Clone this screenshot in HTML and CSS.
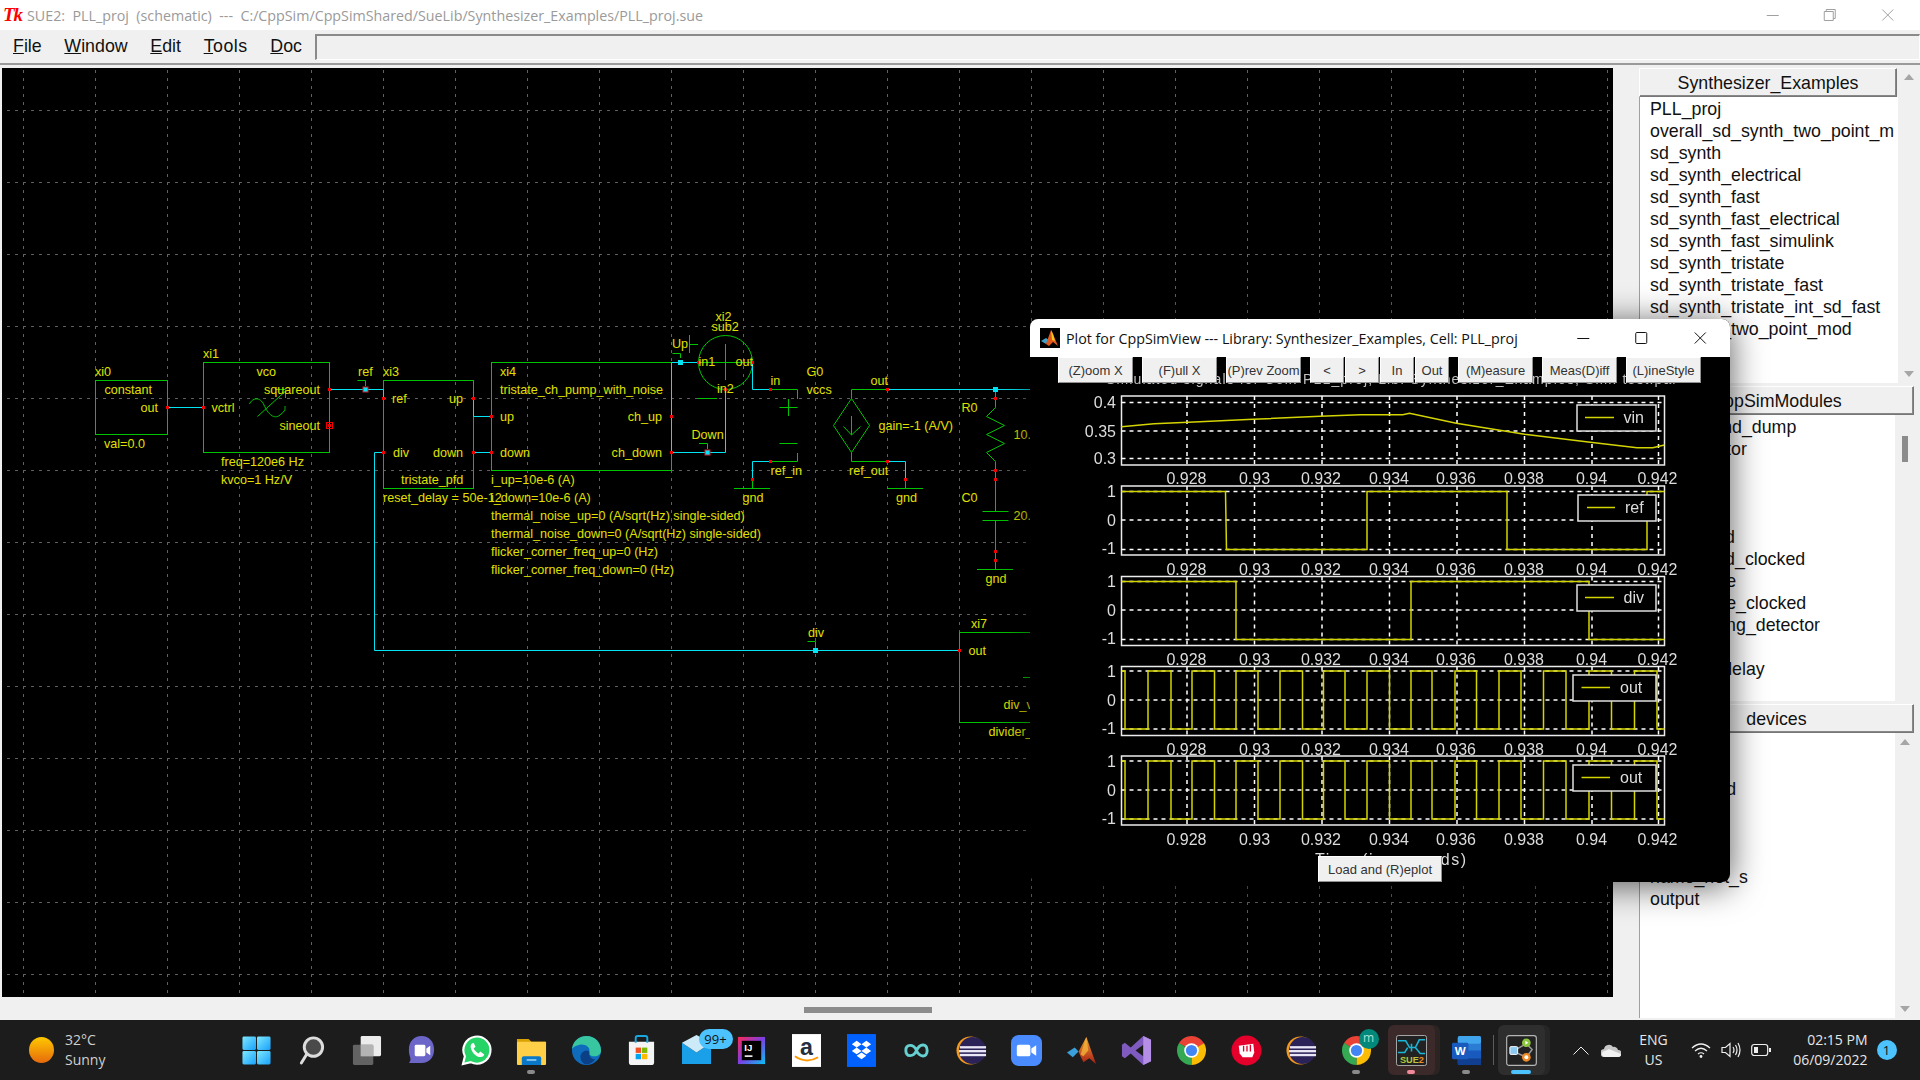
FILE: index.html
```html
<!DOCTYPE html>
<html lang="en">
<head>
  <meta charset="UTF-8">
  <title>SUE2: PLL_proj (schematic)</title>
  <link rel="stylesheet" href="styles.css">
</head>
<body>

  <!-- title bar -->
  <div class="titlebar">
    <span class="tk-logo">Tk</span>
    <span class="titlebar-text">SUE2:  PLL_proj  (schematic)  ---  C:/CppSim/CppSimShared/SueLib/Synthesizer_Examples/PLL_proj.sue</span>
    <div class="win-buttons">
      <svg viewBox="0 0 12 12"><path d="M0 6.5H12"/></svg>
      <svg viewBox="0 0 12 12"><path d="M.5 2.5H9.5V11.5H.5ZM2.5 2.5V.5H11.5V9.5H9.5"/></svg>
      <svg viewBox="0 0 12 12"><path d="M.5 .5L11.5 11.5M11.5 .5L.5 11.5"/></svg>
    </div>
  </div>

  <!-- menu -->
  <div class="menubar">
    <span class="menu-item"><u>F</u>ile</span>
    <span class="menu-item"><u>W</u>indow</span>
    <span class="menu-item"><u>E</u>dit</span>
    <span class="menu-item menu-wide"><u>T</u>ools</span>
    <span class="menu-item"><u>D</u>oc</span>
    <div class="command-entry"></div>
  </div>

  <div class="workspace">
    <div class="canvas-col">
      <!-- schematic, drawn in page coordinates -->
      <svg class="schematic" viewBox="2 68 1611 929" width="1611" height="929">
        <defs>
          <pattern id="grid" x="23" y="38" width="72" height="72" patternUnits="userSpaceOnUse">
            <path class="grid-line" d="M.5 0V72M0 .5H72"/>
          </pattern>
          <rect id="p" class="pin" x="-1.5" y="-1.5" width="3" height="3"/>
          <rect id="n" class="node" x="-2.5" y="-2.5" width="5" height="5"/>
        </defs>
        <rect x="2" y="68" width="1611" height="929" fill="#000"/>
        <rect x="2" y="68" width="1611" height="929" fill="url(#grid)"/>

        <!-- symbols -->
        <g class="sym">
          <rect x="95.5" y="380.5" width="72" height="54"/>
          <rect x="203.5" y="362.5" width="126" height="90"/>
          <rect x="383.5" y="380.5" width="90" height="108"/>
          <rect x="491.5" y="362.5" width="180" height="108"/>
          <rect x="959.5" y="632.5" width="200" height="90"/>
          <path d="M249.5 404C252 398 260 396 264 405S274 420 280 415S285 410 285 406"/>
          <path d="M257.5 416.5L285 391.5M275 389.5H285.5V398"/>
          <path d="M357.5 380.5H365.5V386"/>
          <path d="M672.5 353.5H680.5V358M689.5 335V353M689.5 344.5H698"/>
          <circle cx="725.5" cy="362.5" r="27"/>
          <path d="M725.5 344V380M698.5 362.5H752.5M698 398.5H717"/>
          <path d="M699 443.5H707.5V449"/>
          <path d="M770.5 389.5H797.5V399M779.5 407.5H797.5M788.5 399V416M779.5 443.5H797.5M797.5 453V461.5H770.5"/>
          <path d="M734 488.5H770M752.5 479.5V488.5"/>
          <path d="M851.5 398.5L869.5 425.5L851.5 452.5L833.5 425.5Z"/>
          <path d="M851.5 416V435M843.5 426.5L851.5 435L860.5 426.5"/>
          <path d="M851.5 398.5V389.5H887.5M851.5 452.5V461.5H887.5"/>
          <path d="M887 488.5H923M905.5 479.5V488.5"/>
          <path d="M995.5 389.5V407.5L986.5 416.5L1004.5 425.5L986.5 434.5L1004.5 443.5L986.5 452.5L995.5 461.5V511.5M982.5 511.5H1008.5M982.5 520.5H1008.5M995.5 520.5V569.5M977 569.5H1013"/>
          <path d="M807.5 641.5H815.5V647M1023 677.5H1030"/>
        </g>

        <!-- wires -->
        <g class="wire">
          <path d="M167.5 407.5H203.5"/>
          <path d="M329.5 389.5H383.5V398.5"/>
          <path d="M473.5 398.5V416.5H491.5M473.5 452.5H491.5"/>
          <path d="M383.5 452.5H374.5V650.5H959.5"/>
          <path d="M671.5 362.5H698.5M671.5 362.5V452.5H725.5V389.5"/>
          <path d="M752.5 362.5V389.5H770.5M770.5 461.5H752.5V479.5"/>
          <path d="M887.5 389.5H1032M887.5 461.5H905.5V479.5"/>
        </g>

        <!-- pins and nets -->
        <use href="#p" x="167.5" y="407.5"/><use href="#p" x="203.5" y="407.5"/>
        <use href="#p" x="329.5" y="389.5"/><use href="#p" x="329.5" y="425.5"/>
        <rect class="pin-box" x="326.5" y="422.5" width="6" height="6"/>
        <use href="#p" x="383.5" y="398.5"/><use href="#p" x="383.5" y="452.5"/>
        <use href="#p" x="473.5" y="398.5"/><use href="#p" x="473.5" y="452.5"/>
        <use href="#p" x="491.5" y="416.5"/><use href="#p" x="491.5" y="452.5"/>
        <use href="#p" x="671.5" y="416.5"/><use href="#p" x="671.5" y="452.5"/>
        <use href="#p" x="698.5" y="362.5"/><use href="#p" x="752.5" y="362.5"/>
        <use href="#p" x="725.5" y="389.5"/><use href="#p" x="770.5" y="389.5"/>
        <use href="#p" x="770.5" y="461.5"/><use href="#p" x="752.5" y="479.5"/>
        <use href="#p" x="887.5" y="389.5"/><use href="#p" x="887.5" y="461.5"/>
        <use href="#p" x="905.5" y="479.5"/><use href="#p" x="995.5" y="398.5"/>
        <use href="#p" x="995.5" y="470.5"/><use href="#p" x="995.5" y="479.5"/>
        <use href="#p" x="995.5" y="551.5"/><use href="#p" x="995.5" y="560.5"/>
        <use href="#p" x="959.5" y="650.5"/>
        <use href="#n" x="680.5" y="362.5"/><use href="#n" x="995.5" y="389.5"/>
        <use href="#n" x="815.5" y="650.5"/>
        <rect class="node-open" x="363" y="387" width="5" height="5"/>
        <rect class="node-open" x="705" y="450" width="5" height="5"/>

        <!-- labels -->
        <g class="lbl">
          <text x="95" y="376">xi0</text>
          <text x="104.5" y="394">constant</text>
          <text class="end" x="158" y="412">out</text>
          <text x="104" y="448">val=0.0</text>
          <text x="203" y="358">xi1</text>
          <text x="256.5" y="376">vco</text>
          <text class="end" x="320" y="394">squareout</text>
          <text x="211.5" y="412">vctrl</text>
          <text class="end" x="320" y="430">sineout</text>
          <text x="221" y="466">freq=120e6 Hz</text>
          <text x="221" y="484">kvco=1 Hz/V</text>
          <text x="358" y="376">ref</text>
          <text x="383" y="376">xi3</text>
          <text x="392" y="403">ref</text>
          <text class="end" x="463" y="403">up</text>
          <text x="393" y="457">div</text>
          <text class="end" x="463" y="457">down</text>
          <text x="401" y="484">tristate_pfd</text>
          <text x="383" y="502">reset_delay = 50e-12</text>
          <text x="500" y="376">xi4</text>
          <text x="500" y="394">tristate_ch_pump_with_noise</text>
          <text x="500" y="421">up</text>
          <text class="end" x="662" y="421">ch_up</text>
          <text x="500" y="457">down</text>
          <text class="end" x="662" y="457">ch_down</text>
          <text x="491" y="484">i_up=10e-6 (A)</text>
          <text x="491" y="502">i_down=10e-6 (A)</text>
          <text x="491" y="520">thermal_noise_up=0 (A/sqrt(Hz) single-sided)</text>
          <text x="491" y="538">thermal_noise_down=0 (A/sqrt(Hz) single-sided)</text>
          <text x="491" y="556">flicker_corner_freq_up=0 (Hz)</text>
          <text x="491" y="574">flicker_corner_freq_down=0 (Hz)</text>
          <text x="715.5" y="321">xi2</text>
          <text x="711.5" y="331">sub2</text>
          <text x="672" y="348">Up</text>
          <text x="698.5" y="366">in1</text>
          <text x="735.5" y="366">out</text>
          <text x="717" y="393">in2</text>
          <text x="691.5" y="439">Down</text>
          <text x="770.5" y="385">in</text>
          <text x="770.5" y="475">ref_in</text>
          <text x="742.5" y="502">gnd</text>
          <text x="806.5" y="376">G0</text>
          <text x="806.5" y="394">vccs</text>
          <text x="870.5" y="385">out</text>
          <text x="849" y="475">ref_out</text>
          <text x="878.5" y="430">gain=-1 (A/V)</text>
          <text x="896" y="502">gnd</text>
          <text x="961.5" y="412">R0</text>
          <text x="1013.5" y="439">10.0k</text>
          <text x="961.5" y="502">C0</text>
          <text x="1013.5" y="520">20.0p</text>
          <text x="985.5" y="583">gnd</text>
          <text x="808" y="637">div</text>
          <text x="971" y="628">xi7</text>
          <text x="968.5" y="655">out</text>
          <text x="1003.5" y="709">div_val</text>
          <text x="988.5" y="736">divider_cell</text>
        </g>
      </svg>
      <div class="hscroll"><div class="hscroll-thumb"></div></div>
    </div>

    <!-- library browser -->
    <div class="sidebar">
      <div class="lib lib-first">
        <div class="lib-title">Synthesizer_Examples</div>
        <div class="vscroll"><i class="arrow-up"></i><i class="arrow-down"></i></div>
        <ul class="lib-list">
          <li>PLL_proj</li>
          <li>overall_sd_synth_two_point_m</li>
          <li>sd_synth</li>
          <li>sd_synth_electrical</li>
          <li>sd_synth_fast</li>
          <li>sd_synth_fast_electrical</li>
          <li>sd_synth_fast_simulink</li>
          <li>sd_synth_tristate</li>
          <li>sd_synth_tristate_fast</li>
          <li>sd_synth_tristate_int_sd_fast</li>
          <li>sd_synth_two_point_mod</li>
        </ul>
      </div>
      <div class="lib">
        <div class="lib-title">CppSimModules</div>
        <ul class="lib-list">
          <li>accum_and_dump</li>
          <li>accumulator</li>
          <li>buffer</li>
          <li>counter</li>
          <li>divider</li>
          <li>discretized</li>
          <li>discretized_clocked</li>
          <li>hold_pulse</li>
          <li>hold_pulse_clocked</li>
          <li>up_crossing_detector</li>
          <li>sub</li>
          <li>discrete_delay</li>
        </ul>
        <div class="vscroll vscroll-thumbed"><i class="thumb"></i></div>
      </div>
      <div class="lib">
        <div class="lib-title">devices</div>
        <ul class="lib-list">
          <li>capacitor</li>
          <li>gnd</li>
          <li>signal_gnd</li>
          <li>inductor</li>
          <li>input</li>
          <li>name_net</li>
          <li>name_net_s</li>
          <li>output</li>
        </ul>
        <div class="vscroll"><i class="arrow-up"></i><i class="arrow-down"></i></div>
      </div>
    </div>
  </div>

  <!-- plot window, floats over the schematic -->
  <div class="plot-window">
    <div class="plot-title">
      <svg class="plot-icon" viewBox="0 0 20 20">
        <rect width="20" height="20" fill="#000"/>
        <path d="M1 13L6 10L9 12L6 16Z" fill="#3fa0c8"/>
        <path d="M6 16L11 2L13 6L18 18L13 14L9 18Z" fill="#e2571c"/>
        <path d="M11 2L13 6L15 13L12 12Z" fill="#f5c820"/>
      </svg>
      <span>Plot for CppSimView --- Library: Synthesizer_Examples, Cell: PLL_proj</span>
      <div class="plot-win-buttons">
        <svg viewBox="0 0 12 12"><path d="M0 6.5H12"/></svg>
        <svg viewBox="0 0 12 12"><rect x=".5" y=".5" width="11" height="11" rx="1"/></svg>
        <svg viewBox="0 0 12 12"><path d="M.5 .5L11.5 11.5M11.5 .5L.5 11.5"/></svg>
      </div>
    </div>
    <div class="plot-body">
      <svg class="plot-svg" viewBox="1030 357 700 525" width="700" height="525">
        <defs>
          <g id="frame">
            <rect class="axes" x="1121.5" y="0" width="543" height="69"/>
            <path class="pgrid" d="M1187 0V69M1254.5 0V69M1322 0V69M1389.5 0V69M1457 0V69M1524.5 0V69M1592 0V69M1658.5 0V69"/>
          </g>
        </defs>

        <text class="ptext heading" x="1106" y="384" textLength="571">Simulated signals for Cell: PLL_proj, Lib: Synthesizer_Examples, Sim: test.par</text>

        <use href="#frame" y="396"/><use href="#frame" y="486"/><use href="#frame" y="576.5"/>
        <use href="#frame" y="666.5"/><use href="#frame" y="756"/>
        <path class="pgrid" d="M1121.5 402.5H1664.5M1121.5 431H1664.5M1121.5 458.5H1664.5"/>
        <path class="pgrid" d="M1121.5 491.5H1664.5M1121.5 520H1664.5M1121.5 549.5H1664.5"/>
        <path class="pgrid" d="M1121.5 581.5H1664.5M1121.5 610H1664.5M1121.5 639.5H1664.5"/>
        <path class="pgrid" d="M1121.5 671H1664.5M1121.5 700H1664.5M1121.5 729H1664.5"/>
        <path class="pgrid" d="M1121.5 761H1664.5M1121.5 790H1664.5M1121.5 819H1664.5"/>

        <polyline class="trace" points="1121.5,426.7 1154,423.7 1199.6,421.7 1253,419.3 1320,416.3 1360.4,414.7 1402.8,414.7 1409.5,413.3 1456.3,423.3 1524.6,434.3 1590.3,442.3 1637,447.7 1652.8,447.7 1664.4,445"/>
        <path class="trace" d="M1121.5 491.5H1225.5L1226.5 549.5H1367V491.5H1507V549.5H1647V491.5H1664.5"/>
        <path class="trace" d="M1121.5 581.5H1236V639.5H1411V581.5H1589V639.5H1664.5"/>
        <path id="outwave" class="trace" d="M1121.5 671H1125V729H1148V671H1171V729H1192V671H1214.5V729H1236V671H1258V729H1280V671H1302.5V729H1323.5V671H1345V729H1367V671H1389.5V729H1411V671H1432V729H1455V671H1476.5V729H1499V671H1521V729H1543.5V671H1566V729H1589V671H1611.5V729H1634.5V671H1657V729H1664.5"/>
        <use href="#outwave" y="90"/>

        <!-- legends -->
        <rect class="legend" x="1577" y="405" width="79" height="26"/>
        <path class="trace" d="M1585 417.5H1614"/><text class="ptext" x="1623.5" y="423">vin</text>
        <rect class="legend" x="1578" y="495" width="78" height="26"/>
        <path class="trace" d="M1587 507.5H1615"/><text class="ptext" x="1625" y="513">ref</text>
        <rect class="legend" x="1577" y="585" width="79" height="26"/>
        <path class="trace" d="M1585 597.5H1614"/><text class="ptext" x="1623.5" y="603">div</text>
        <rect class="legend" x="1573" y="675" width="83" height="26"/>
        <path class="trace" d="M1581.5 687.5H1610"/><text class="ptext" x="1620" y="693">out</text>
        <rect class="legend" x="1573" y="765" width="83" height="26"/>
        <path class="trace" d="M1581.5 777.5H1610"/><text class="ptext" x="1620" y="783">out</text>

        <!-- y ticks -->
        <g class="ptext end">
          <text x="1116" y="408">0.4</text><text x="1116" y="437">0.35</text><text x="1116" y="464">0.3</text>
          <text x="1116" y="497">1</text><text x="1116" y="526">0</text><text x="1116" y="554">-1</text>
          <text x="1116" y="587">1</text><text x="1116" y="616">0</text><text x="1116" y="644">-1</text>
          <text x="1116" y="677">1</text><text x="1116" y="706">0</text><text x="1116" y="734">-1</text>
          <text x="1116" y="767">1</text><text x="1116" y="796">0</text><text x="1116" y="824">-1</text>
        </g>
        <!-- x ticks -->
        <g class="ptext mid">
          <text x="1186.5" y="484">0.928</text><text x="1254.5" y="484">0.93</text><text x="1321" y="484">0.932</text><text x="1389" y="484">0.934</text><text x="1456" y="484">0.936</text><text x="1524" y="484">0.938</text><text x="1591.5" y="484">0.94</text><text x="1657.5" y="484">0.942</text>
          <text x="1186.5" y="575">0.928</text><text x="1254.5" y="575">0.93</text><text x="1321" y="575">0.932</text><text x="1389" y="575">0.934</text><text x="1456" y="575">0.936</text><text x="1524" y="575">0.938</text><text x="1591.5" y="575">0.94</text><text x="1657.5" y="575">0.942</text>
          <text x="1186.5" y="665">0.928</text><text x="1254.5" y="665">0.93</text><text x="1321" y="665">0.932</text><text x="1389" y="665">0.934</text><text x="1456" y="665">0.936</text><text x="1524" y="665">0.938</text><text x="1591.5" y="665">0.94</text><text x="1657.5" y="665">0.942</text>
          <text x="1186.5" y="755">0.928</text><text x="1254.5" y="755">0.93</text><text x="1321" y="755">0.932</text><text x="1389" y="755">0.934</text><text x="1456" y="755">0.936</text><text x="1524" y="755">0.938</text><text x="1591.5" y="755">0.94</text><text x="1657.5" y="755">0.942</text>
          <text x="1186.5" y="845">0.928</text><text x="1254.5" y="845">0.93</text><text x="1321" y="845">0.932</text><text x="1389" y="845">0.934</text><text x="1456" y="845">0.936</text><text x="1524" y="845">0.938</text><text x="1591.5" y="845">0.94</text><text x="1657.5" y="845">0.942</text>
        </g>
        <text class="ptext" x="1315" y="865" textLength="151">Time (in seconds)</text>
      </svg>

      <div class="plot-tools">
        <button class="tool">(Z)oom X</button>
        <button class="tool">(F)ull X</button>
        <button class="tool">(P)rev Zoom</button>
        <div class="tool-group">
          <button class="tool tool-small">&lt;</button>
          <button class="tool tool-small">&gt;</button>
          <button class="tool tool-small">In</button>
          <button class="tool tool-small">Out</button>
        </div>
        <button class="tool">(M)easure</button>
        <button class="tool">Meas(D)iff</button>
        <button class="tool">(L)ineStyle</button>
      </div>
      <button class="tool tool-replot">Load and (R)eplot</button>
    </div>
  </div>

  <!-- taskbar -->
  <div class="taskbar">
    <svg width="0" height="0" class="defs-only">
      <defs>
        <linearGradient id="wn" x1="0" y1="0" x2="1" y2="1"><stop offset="0" stop-color="#7fe9ff"/><stop offset="1" stop-color="#18a0fb"/></linearGradient>
        <linearGradient id="sun" x1="0" y1="0" x2="0" y2="1"><stop offset="0" stop-color="#ffc800"/><stop offset="1" stop-color="#e66a0c"/></linearGradient>
        <linearGradient id="ij" x1="0" y1="0" x2="1" y2="1"><stop offset="0" stop-color="#fe2857"/><stop offset=".5" stop-color="#7b3fe4"/><stop offset="1" stop-color="#07c3f2"/></linearGradient>
        <linearGradient id="ml" x1="0" y1="0" x2="0" y2="1"><stop offset="0" stop-color="#f0a030"/><stop offset="1" stop-color="#a81f14"/></linearGradient>
        <g id="eclipse">
          <circle cx="15" cy="16" r="14.5" fill="#f39a1e"/>
          <circle cx="17" cy="16" r="14" fill="#2b2358"/>
          <rect x="4" y="11.5" width="27" height="2.4" fill="#e9e6f5"/>
          <rect x="3" y="15.5" width="28" height="2.4" fill="#e9e6f5"/>
          <rect x="4" y="19.5" width="27" height="2.4" fill="#e9e6f5"/>
        </g>
        <g id="chrome" fill="none" stroke-width="9">
          <circle cx="16" cy="16" r="10.5" stroke="#ea4335" stroke-dasharray="22 44" transform="rotate(-150 16 16)"/>
          <circle cx="16" cy="16" r="10.5" stroke="#fbbc04" stroke-dasharray="22 44" transform="rotate(-30 16 16)"/>
          <circle cx="16" cy="16" r="10.5" stroke="#34a853" stroke-dasharray="22 44" transform="rotate(90 16 16)"/>
          <circle cx="16" cy="16" r="7.5" fill="#fff" stroke="none"/>
          <circle cx="16" cy="16" r="5.8" fill="#4285f4" stroke="none"/>
        </g>
      </defs>
    </svg>

    <div class="weather">
      <svg class="sun" viewBox="0 0 25 26"><ellipse cx="12.5" cy="13" rx="12.5" ry="13" fill="url(#sun)"/></svg>
      <div class="weather-text"><span>32°C</span><span>Sunny</span></div>
    </div>

    <div class="task-icons">
      <div class="slot"><svg class="ti" viewBox="0 0 32 32">
        <rect x="1.5" y="1.5" width="14" height="14" rx="1.5" fill="url(#wn)"/><rect x="16.5" y="1.5" width="14" height="14" rx="1.5" fill="url(#wn)"/>
        <rect x="1.5" y="16.5" width="14" height="14" rx="1.5" fill="url(#wn)"/><rect x="16.5" y="16.5" width="14" height="14" rx="1.5" fill="url(#wn)"/>
      </svg></div>
      <div class="slot"><svg class="ti" viewBox="0 0 32 32">
        <circle cx="18" cy="12.5" r="9.5" fill="#4a4a4a" stroke="#ddd" stroke-width="3"/>
        <path d="M11 20L5.5 29" stroke="#ddd" stroke-width="3" stroke-linecap="round"/>
      </svg></div>
      <div class="slot"><svg class="ti" viewBox="0 0 32 32">
        <rect x="10" y="1" width="21" height="21" rx="1.5" fill="#ececec"/>
        <rect x="2" y="10" width="21" height="21" rx="1.5" fill="#6b6b6b" opacity=".9"/>
        <rect x="10" y="10" width="13" height="12" fill="#b4b4b4"/>
      </svg></div>
      <div class="slot"><svg class="ti" viewBox="0 0 32 32">
        <path d="M16 1C24 1 29 7 29 15C29 23 24 29 16 29H3C5 27 5 25 4 22C3 19 3 17 3 15C3 7 8 1 16 1Z" fill="#6c66c9"/>
        <rect x="9" y="10" width="11" height="12" rx="1.5" fill="#fff"/><path d="M21 14L25 11V21L21 18Z" fill="#fff"/>
      </svg></div>
      <div class="slot"><svg class="ti" viewBox="0 0 32 32">
        <path d="M2 30L4 22A14 14 0 1 1 10 28Z" fill="#25d366" stroke="#fff" stroke-width="2.2"/>
        <path d="M11 9C9 11 10 15 13 19C16 22 20 24 23 22L24 20L20 17L18 19C16 18 14 16 13 14L15 12L13 8Z" fill="#fff"/>
      </svg></div>
      <div class="slot"><svg class="ti" viewBox="0 0 32 32">
        <path d="M1 4H13L16 7H31V14H1Z" fill="#d9a200"/>
        <rect x="1" y="7" width="30" height="24" rx="1" fill="#ffcf48"/>
        <path d="M6 31V24Q6 22 8 22H24Q26 22 26 24V31Z" fill="#0a78c8"/><rect x="11" y="25" width="10" height="1.6" fill="#9fd4f5"/>
      </svg><i class="pill"></i></div>
      <div class="slot"><svg class="ti" viewBox="0 0 32 32">
        <circle cx="16" cy="16" r="15" fill="#0f6cbd"/>
        <path d="M1 16C1 7 8 1 16 1C25 1 31 8 31 16C31 20 28 22 24 22C20 22 18 20 19 17C20 12 14 9 9 10C4 11 1 13 1 16Z" fill="#37c6a0"/>
        <path d="M14 30C9 27 8 20 13 17C16 15 19 16 19 18C18 22 21 25 25 25C22 29 18 31 14 30Z" fill="#0b3f86"/>
      </svg></div>
      <div class="slot"><svg class="ti" viewBox="0 0 32 32">
        <path d="M3 7H29V28Q29 31 26 31H6Q3 31 3 28Z" fill="#f4f4f4"/>
        <path d="M10 8V3Q10 1 12 1H20Q22 1 22 3V8" fill="none" stroke="#19a7e0" stroke-width="2"/>
        <rect x="10" y="13" width="5.5" height="5.5" fill="#f25022"/><rect x="16.5" y="13" width="5.5" height="5.5" fill="#7fba00"/>
        <rect x="10" y="19.5" width="5.5" height="5.5" fill="#00a4ef"/><rect x="16.5" y="19.5" width="5.5" height="5.5" fill="#ffb900"/>
      </svg></div>
      <div class="slot"><svg class="ti" viewBox="0 0 32 32">
        <path d="M1 8L16 18L31 8V30H1Z" fill="#1aa0e8"/><path d="M1 8L16 0L31 8L16 18Z" fill="#cdeaf8"/>
      </svg><span class="count-badge">99+</span></div>
      <div class="slot"><svg class="ti" viewBox="0 0 32 32">
        <rect x="2" y="2" width="28" height="28" fill="url(#ij)"/><rect x="6" y="6" width="20" height="20" fill="#000"/>
        <text class="ij-text" x="8.5" y="17">IJ</text><rect x="9" y="21" width="8" height="1.6" fill="#fff"/>
      </svg></div>
      <div class="slot"><svg class="ti ti-tall" viewBox="0 0 30 34">
        <rect width="30" height="34" fill="#fff"/>
        <text class="amazon-text" x="15" y="22">a</text>
        <path d="M3 23Q15 31 27 24" fill="none" stroke="#f90" stroke-width="2"/>
      </svg></div>
      <div class="slot"><svg class="ti ti-tall" viewBox="0 0 30 34">
        <rect width="30" height="34" fill="#0061fe"/>
        <path d="M10 7L15 10.5L10 14L5 10.5ZM20 7L25 10.5L20 14L15 10.5ZM10 14L15 17.5L10 21L5 17.5ZM20 14L25 17.5L20 21L15 17.5ZM15 19L20 22.5L15 26L10 22.5Z" fill="#fff"/>
      </svg></div>
      <div class="slot"><svg class="ti" viewBox="0 0 32 32">
        <path d="M16 16C13 9 5 9 5 16S13 23 16 16S27 8 27 16S19 23 16 16Z" fill="none" stroke="#66d0d0" stroke-width="3"/>
      </svg></div>
      <div class="slot"><svg class="ti" viewBox="0 0 32 32"><use href="#eclipse"/></svg></div>
      <div class="slot"><svg class="ti" viewBox="0 0 32 32">
        <rect width="32" height="32" rx="8" fill="#4a8cff"/>
        <rect x="6" y="10" width="14" height="12" rx="2" fill="#fff"/><path d="M21 14L26 10.5V21.5L21 18Z" fill="#fff"/>
      </svg></div>
      <div class="slot"><svg class="ti" viewBox="0 0 32 32">
        <path d="M1 18L9 13L13 17L7 23Z" fill="#3aa0dc"/>
        <path d="M13 17L21 2L31 30L24 24L18 28L15 22Z" fill="url(#ml)"/>
        <path d="M21 2L23 16L18 22L15 20Z" fill="#f3b23a" opacity=".8"/>
      </svg></div>
      <div class="slot"><svg class="ti" viewBox="0 0 32 32">
        <path d="M23 1L31 5V27L23 31L10 19L4 24L1 22V10L4 8L10 13Z" fill="#7f5bbf"/>
        <path d="M23 10L15 16L23 22Z" fill="#1c1c1c"/><path d="M23 1L31 5V27L23 31Z" fill="#b58ee6"/>
      </svg></div>
      <div class="slot"><svg class="ti" viewBox="0 0 32 32"><use href="#chrome"/></svg></div>
      <div class="slot"><svg class="ti" viewBox="0 0 32 32">
        <circle cx="16" cy="16" r="15.5" fill="#e4002b"/>
        <path d="M8 11L23 9L24 18L22 23H12L9 19Z" fill="#fff"/>
        <path d="M13 11V17M16.5 11V17M20 10V17" stroke="#e4002b" stroke-width="1.4"/>
      </svg></div>
      <div class="slot"><svg class="ti" viewBox="0 0 32 32"><use href="#eclipse"/></svg></div>
      <div class="slot"><svg class="ti" viewBox="0 0 32 32"><use href="#chrome"/></svg><span class="m-badge">m</span><i class="pill"></i></div>
      <div class="slot slot-on slot-sue"><svg class="ti" viewBox="0 0 32 32">
        <rect x=".5" y=".5" width="31" height="31" rx="2" fill="#222" stroke="#aaa"/>
        <path d="M2 6H10L14 13H20L24 5H30M2 18H9L12 13M20 13L25 19H30M16 9V17" fill="none" stroke="#18b6d8" stroke-width="1.6"/>
        <text class="sue-text" x="4" y="29">SUE<tspan class="sue-two">2</tspan></text>
      </svg><i class="pill pill-pink"></i></div>
      <div class="slot"><svg class="ti" viewBox="0 0 32 32">
        <rect x="7" y="1" width="24" height="30" rx="2" fill="#2b7cd3"/><rect x="7" y="1" width="24" height="8" rx="2" fill="#41a5ee"/>
        <rect x="7" y="16" width="24" height="8" fill="#185abd"/><rect x="7" y="24" width="24" height="7" fill="#103f91"/>
        <rect x="1" y="8" width="17" height="17" rx="1.5" fill="#185abd"/><text class="word-text" x="9.5" y="21">W</text>
      </svg><i class="pill"></i></div>
      <div class="slot slot-on slot-cpp"><svg class="ti" viewBox="0 0 32 32">
        <rect x=".7" y=".7" width="30.6" height="30.6" rx="2.5" fill="#222" stroke="#b5b5b5" stroke-width="1.2"/>
        <path d="M10 15L21 9L27 15L21 23L10 18" fill="none" stroke="#999" stroke-width="1.5"/>
        <rect x="4" y="12" width="8" height="8" rx="1" fill="#8cc8f0" stroke="#fff"/>
        <circle cx="21" cy="8" r="4.5" fill="#8cc63f"/><path d="M20 6V10L23 8Z" fill="#fff"/>
        <circle cx="21" cy="23" r="4.5" fill="#f08a24"/><circle cx="21" cy="23" r="2" fill="#fff"/>
      </svg><i class="pill pill-blue"></i></div>
    </div>

    <div class="tray">
      <svg class="tray-chevron" viewBox="0 0 16 9"><path d="M.5 8.5L8 1L15.5 8.5"/></svg>
      <svg class="tray-cloud" viewBox="0 0 20 13">
        <path d="M4 13A4 4 0 0 1 3 5A5 5 0 0 1 12 3A4 4 0 0 1 17 6A3.5 3.5 0 0 1 17 13Z" fill="#c8c8c8"/>
        <path d="M4 13A3 3 0 0 1 4 7L8 5L15 8L20 10Q19.5 13 17 13Z" fill="#f2f2f2"/>
      </svg>
      <div class="tray-lang"><span>ENG</span><span>US</span></div>
      <div class="tray-status">
        <svg viewBox="0 0 20 16"><path d="M1 6Q10 -2 19 6M4 9Q10 3.5 16 9M7 12Q10 9.5 13 12"/><circle cx="10" cy="14.5" r="1.4"/></svg>
        <svg viewBox="0 0 20 16"><path d="M1 5.5H4.5L9 1.5V14.5L4.5 10.5H1ZM12 5Q14 8 12 11M14.5 3Q17.5 8 14.5 13M17 1Q21 8 17 15"/></svg>
        <svg viewBox="0 0 20 16"><rect x=".7" y="2.5" width="16" height="11" rx="2.5"/><rect x="3" y="5" width="4" height="6" class="batt-fill"/><rect x="18" y="6" width="2" height="4" class="batt-fill"/></svg>
      </div>
      <div class="tray-clock"><span>02:15 PM</span><span>06/09/2022</span></div>
      <span class="tray-badge">1</span>
    </div>
  </div>

</body>
</html>
```

FILE: styles.css
```css
* {
  box-sizing: border-box;
}

html, body {
  margin: 0;
  width: 1920px;
  height: 1080px;
  overflow: hidden;
}

body {
  position: relative;
  display: flex;
  flex-direction: column;
  font-family: "Liberation Sans", Arial, sans-serif;
  background: #f0f0f0;
}

/* title bar */
.titlebar {
  height: 30px;
  display: flex;
  align-items: center;
  background: #fff;
  padding-left: 3px;
  flex-shrink: 0;
}

.tk-logo {
  width: 24px;
  font-family: "Liberation Serif", serif;
  font-style: italic;
  font-weight: bold;
  font-size: 19px;
  letter-spacing: -1px;
  color: #ff0000;
}

.titlebar-text {
  font-family: "Open Sans", sans-serif;
  font-size: 14.28px;
  color: #9a9a9a;
  white-space: pre;
}

.win-buttons {
  margin-left: auto;
  display: flex;
  padding-right: 4px;
}

.win-buttons svg {
  width: 57.5px;
  height: 12px;
  fill: none;
  stroke: #a0a0a0;
  stroke-width: 1;
}

/* menu */
.menubar {
  height: 35px;
  flex-shrink: 0;
  display: flex;
  align-items: center;
  gap: 22.7px;
  padding-left: 13px;
  background: #f0f0f0;
  border-bottom: 2px solid #9a9a9a;
  font-size: 17.8px;
  color: #111;
}

.menu-wide {
  letter-spacing: 0.5px;
}

.command-entry {
  flex: 1;
  height: 26px;
  margin-left: -10px;
  background: #f0f0f0;
  border: 1px solid #fff;
  border-top: 2px solid #8a8a8a;
  border-left: 2px solid #8a8a8a;
}

/* workspace */
.workspace {
  flex: 1;
  min-height: 0;
  display: flex;
  padding-top: 3px;
}

.canvas-col {
  width: 1613px;
  flex-shrink: 0;
  display: flex;
  flex-direction: column;
}

.schematic {
  display: block;
  margin-left: 2px;
  flex-shrink: 0;
}

.grid-line {
  fill: none;
  stroke: #606060;
  stroke-width: 1;
  stroke-dasharray: 3 5;
}

.sym {
  fill: none;
  stroke: #00c400;
  stroke-width: 1;
}

.wire {
  fill: none;
  stroke: #00e4f4;
  stroke-width: 1;
}

.pin {
  fill: #f00000;
}

.pin-box {
  fill: none;
  stroke: #f00000;
  stroke-width: 1;
}

.node {
  fill: #00e4f4;
}

.node-open {
  fill: #00e4f4;
  stroke: #d02030;
  stroke-width: 1;
}

.lbl text {
  font-size: 12.6px;
  fill: #e0e000;
}

.lbl .end {
  text-anchor: end;
}

.hscroll {
  flex: 1;
  padding: 10px 0 0 804px;
}

.hscroll-thumb {
  width: 128px;
  height: 6px;
  background: #8c8c8c;
}

/* library browser */
.sidebar {
  flex: 1;
  display: grid;
  grid-template-rows: 315px 315px 314px;
  gap: 3px;
  padding-left: 26px;
  font-size: 17.8px;
  color: #111;
}

.lib {
  display: grid;
  grid-template-columns: 256px 19px;
  grid-template-rows: 29px 1fr;
  width: 275px;
  min-height: 0;
}

.lib-title {
  grid-column: 1 / 3;
  text-align: center;
  line-height: 29px;
  background: #f0f0f0;
  border: 1px solid #777;
  border-top-color: #fff;
  border-left-color: #fff;
  box-shadow: inset -1px -1px 0 #888;
}

.lib-first {
  grid-template-columns: 259px 22px;
  width: 281px;
}

.lib-first .lib-title {
  grid-column: 1;
  width: 258px;
}

.lib-first .vscroll {
  grid-column: 2;
  grid-row: 1 / 3;
}

.lib-first .lib-list {
  grid-column: 1;
  grid-row: 2;
}

.lib-list {
  list-style: none;
  margin: 0;
  padding: 1px 0 0 10px;
  background: #fff;
  overflow: hidden;
  white-space: nowrap;
  border-left: 1px solid #a0a0a0;
  line-height: 22px;
}

.vscroll {
  display: flex;
  flex-direction: column;
  justify-content: space-between;
  align-items: center;
  padding: 6px 0;
  background: #f0f0f0;
}

.vscroll-thumbed {
  justify-content: flex-start;
  padding-top: 21px;
}

.thumb {
  width: 6px;
  height: 26px;
  background: #8c8c8c;
}

.arrow-up, .arrow-down {
  width: 0;
  height: 0;
  border-left: 5px solid transparent;
  border-right: 5px solid transparent;
}

.arrow-up {
  border-bottom: 6px solid #a6a6a6;
}

.arrow-down {
  border-top: 6px solid #a6a6a6;
}

/* plot window */
.plot-window {
  position: absolute;
  left: 1030px;
  top: 319px;
  width: 700px;
  height: 563px;
  display: flex;
  flex-direction: column;
  background: #000;
  border-radius: 8px;
  box-shadow: 0 4px 34px rgba(0, 0, 0, 0.65);
}

.plot-title {
  height: 38px;
  flex-shrink: 0;
  display: flex;
  align-items: center;
  padding-left: 10px;
  background: #fff;
  border-radius: 8px 8px 0 0;
  font-family: "Open Sans", sans-serif;
  font-size: 14.27px;
  color: #111;
  white-space: nowrap;
}

.plot-icon {
  width: 20px;
  height: 20px;
  margin-right: 6px;
  flex-shrink: 0;
}

.plot-win-buttons {
  margin-left: auto;
  display: flex;
  padding-right: 1px;
}

.plot-win-buttons svg {
  width: 58.5px;
  height: 12px;
  fill: none;
  stroke: #111;
  stroke-width: 1;
}

.plot-body {
  position: relative;
  flex: 1;
}

.plot-svg {
  position: absolute;
  left: 0;
  top: 0;
  filter: blur(0.3px);
}

.axes {
  fill: none;
  stroke: #ececec;
  stroke-width: 1.5;
}

.pgrid {
  fill: none;
  stroke: #fff;
  stroke-width: 1.5;
  stroke-dasharray: 4 4;
}

.trace {
  fill: none;
  stroke: #d4d400;
  stroke-width: 1.5;
}

.legend {
  fill: #000;
  stroke: #e0e0e0;
  stroke-width: 1.5;
}

.ptext, .ptext text {
  font-size: 16px;
  fill: #dcdcdc;
}

.ptext.end text {
  text-anchor: end;
}

.ptext.mid text {
  text-anchor: middle;
}

.heading {
  font-size: 14px;
  fill: #c0c0c0;
}

.plot-tools {
  position: relative;
  display: flex;
  gap: 9px;
  padding-left: 28px;
}

.tool-group {
  display: flex;
  gap: 1px;
}

.tool {
  width: 75px;
  height: 26px;
  padding: 0;
  font-family: "Liberation Sans", Arial, sans-serif;
  font-size: 13px;
  color: #333;
  background: #f0f0f0;
  border: 1px solid #fff;
  border-right-color: #909090;
  border-bottom-color: #909090;
  white-space: nowrap;
}

.tool-small {
  width: 34px;
}

.tool-replot {
  position: absolute;
  left: 288px;
  bottom: 0;
  width: 124px;
}

/* taskbar */
.taskbar {
  height: 60px;
  flex-shrink: 0;
  display: flex;
  align-items: center;
  background: #1c1c1c;
  font-family: "Open Sans", sans-serif;
  font-size: 14px;
  color: #e6e6e6;
}

.defs-only {
  position: absolute;
}

.weather {
  width: 228.5px;
  flex-shrink: 0;
  display: flex;
  align-items: center;
  gap: 11px;
  padding-left: 29px;
}

.sun {
  width: 25px;
  height: 26px;
}

.weather-text {
  display: flex;
  flex-direction: column;
  line-height: 20px;
  color: #d0d0d0;
}

.task-icons {
  display: flex;
}

.slot {
  position: relative;
  width: 55px;
  height: 50px;
  display: flex;
  align-items: center;
  justify-content: center;
}

.ti {
  width: 31px;
  height: 31px;
  overflow: visible;
}

.ti-tall {
  width: 29px;
  height: 33px;
}

.slot-on {
  width: 47px;
  margin: 0 4px;
  border-radius: 6px;
}

.slot-sue {
  background: #3c2a2a;
  box-shadow: 5px 0 0 #2c2323;
}

.slot-cpp {
  background: #2e2e2e;
  box-shadow: 5px 0 0 #262626;
}

.slot-cpp::before {
  content: "";
  position: absolute;
  left: -5px;
  top: 10px;
  width: 1px;
  height: 30px;
  background: #5c5c5c;
}

.pill {
  position: absolute;
  left: 50%;
  bottom: 1px;
  width: 8px;
  height: 4px;
  margin-left: -4px;
  border-radius: 2px;
  background: #8a8a8a;
}

.pill-pink {
  background: #f08a9a;
}

.pill-blue {
  width: 20px;
  margin-left: -10px;
  background: #4cc2ff;
}

.count-badge {
  position: absolute;
  left: 30px;
  top: 4px;
  width: 34px;
  height: 20px;
  border-radius: 10px;
  background: #4cc2ff;
  color: #111;
  font-size: 13px;
  line-height: 20px;
  text-align: center;
}

.m-badge {
  position: absolute;
  left: 30px;
  top: 4px;
  width: 20px;
  height: 20px;
  border-radius: 50%;
  background: #00897b;
  color: #a8e0d8;
  font-size: 12px;
  line-height: 18px;
  text-align: center;
}

.ij-text {
  font: bold 10px "Liberation Sans", sans-serif;
  fill: #fff;
}

.amazon-text {
  font: bold 24px "Liberation Sans", sans-serif;
  fill: #232f3e;
  text-anchor: middle;
}

.sue-text {
  font: bold 9.5px "Liberation Sans", sans-serif;
  fill: #b8c83a;
}

.sue-two {
  fill: #f08a24;
}

.word-text {
  font: bold 12px "Liberation Sans", sans-serif;
  fill: #fff;
  text-anchor: middle;
}

.tray {
  display: flex;
  align-items: center;
  margin-left: 24px;
}

.tray-chevron {
  width: 16px;
  height: 9px;
  fill: none;
  stroke: #eee;
  stroke-width: 1;
}

.tray-cloud {
  width: 20px;
  height: 13px;
  margin-left: 12px;
}

.tray-lang {
  width: 30px;
  margin-left: 18px;
  display: flex;
  flex-direction: column;
  align-items: center;
  line-height: 20px;
}

.tray-status {
  display: flex;
  gap: 10px;
  margin-left: 22px;
}

.tray-status svg {
  width: 20px;
  height: 16px;
  fill: none;
  stroke: #eee;
  stroke-width: 1.2;
}

.tray-status circle, .batt-fill {
  fill: #eee;
  stroke: none;
}

.tray-clock {
  width: 97px;
  display: flex;
  flex-direction: column;
  align-items: flex-end;
  line-height: 20px;
}

.tray-badge {
  width: 20px;
  height: 20px;
  margin-left: 9px;
  border-radius: 50%;
  background: #4cc2ff;
  color: #111;
  font-size: 13px;
  line-height: 20px;
  text-align: center;
}
```
